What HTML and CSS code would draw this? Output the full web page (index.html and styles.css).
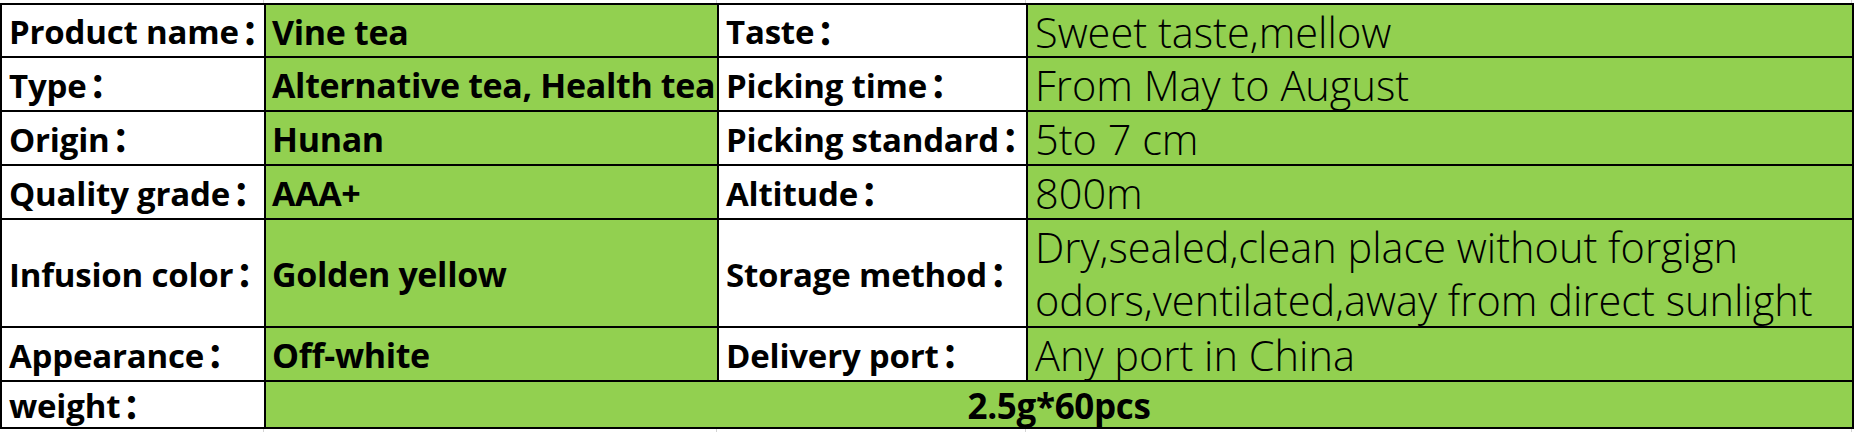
FILE: index.html
```html
<!DOCTYPE html>
<html lang="en">
<head>
<meta charset="utf-8">
<title>Vine tea</title>
<link rel="stylesheet" href="styles.css">
</head>
<body>
<div class="sheet">
  <div class="grid-strip top"><span></span><span></span><span></span><span></span></div>
  <div class="spec">
    <div class="cell label">Product name<span class="colon">：</span></div>
    <div class="cell val">Vine tea</div>
    <div class="cell label">Taste<span class="colon">：</span></div>
    <div class="cell val light">Sweet taste,mellow</div>

    <div class="cell label">Type<span class="colon">：</span></div>
    <div class="cell val">Alternative tea, Health tea</div>
    <div class="cell label">Picking time<span class="colon">：</span></div>
    <div class="cell val light">From May to August</div>

    <div class="cell label">Origin<span class="colon">：</span></div>
    <div class="cell val">Hunan</div>
    <div class="cell label">Picking standard<span class="colon">：</span></div>
    <div class="cell val light">5to 7 cm</div>

    <div class="cell label">Quality grade<span class="colon">：</span></div>
    <div class="cell val">AAA+</div>
    <div class="cell label">Altitude<span class="colon">：</span></div>
    <div class="cell val light">800m</div>

    <div class="cell label">Infusion color<span class="colon">：</span></div>
    <div class="cell val">Golden yellow</div>
    <div class="cell label">Storage method<span class="colon">：</span></div>
    <div class="cell val light wrap">Dry,sealed,clean place without forgign<br>odors,ventilated,away from direct sunlight</div>

    <div class="cell label">Appearance<span class="colon">：</span></div>
    <div class="cell val">Off-white</div>
    <div class="cell label">Delivery port<span class="colon">：</span></div>
    <div class="cell val light">Any port in China</div>

    <div class="cell label">weight<span class="colon">：</span></div>
    <div class="cell val merged">2.5g*60pcs</div>
  </div>
  <div class="grid-strip bottom"><span></span><span></span><span></span><span></span></div>
</div>
</body>
</html>
```
FILE: styles.css
```css
html, body {
  margin: 0;
  padding: 0;
  background: #ffffff;
}

.sheet {
  width: 1854px;
  height: 432px;
  overflow: hidden;
  font-family: "Open Sans", "Noto Sans CJK JP", sans-serif;
  color: #000000;
}

.grid-strip {
  display: grid;
  grid-template-columns: 264px 453px 309px 826px 2px;
  height: 3px;
}
.grid-strip span {
  border-right: 1px solid #d4d4d4;
}

.spec {
  display: grid;
  grid-template-columns: 262px 451px 307px 824px;
  grid-template-rows: 51px 52px 52px 52px 106px 52px 45px;
  gap: 2px;
  padding: 2px;
  background: #000000;
}

.cell {
  display: flex;
  align-items: center;
  padding: 2px 0 0 8px;
  white-space: nowrap;
  overflow: visible;
  background: #92d050;
}

.label {
  background: #ffffff;
  font-weight: 700;
  font-size: 33px;
  padding-left: 7px;
  letter-spacing: -0.2px;
}

.colon {
  font-family: "Noto Sans CJK JP", sans-serif;
  font-weight: 900;
  font-feature-settings: "halt" 1;
  margin-left: 3px;
  letter-spacing: 0;
}

.val {
  font-weight: 700;
  font-size: 34px;
  padding-left: 6px;
  letter-spacing: -0.35px;
}

.light {
  font-weight: 300;
  font-size: 41.5px;
  padding-left: 7px;
  letter-spacing: 0;
}

.wrap {
  line-height: 53px;
}

.merged {
  grid-column: 2 / span 3;
  justify-content: center;
  padding-left: 0;
  font-size: 35px;
}
```
